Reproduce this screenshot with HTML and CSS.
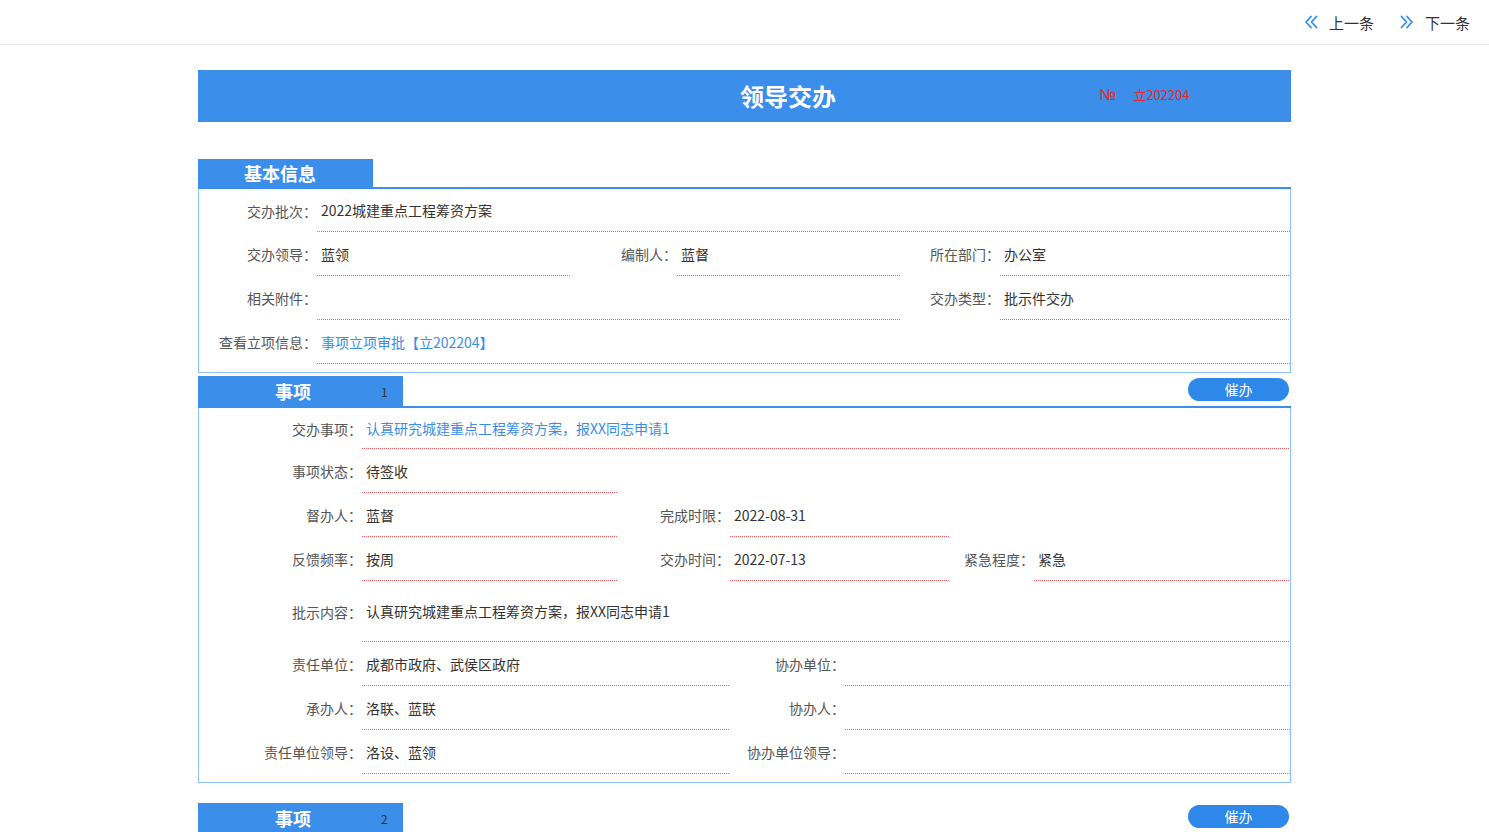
FILE: index.html
```html
<!DOCTYPE html>
<html lang="zh-CN">
<head>
<meta charset="utf-8">
<title>领导交办</title>
<link rel="stylesheet" href="styles.css">
</head>
<body>
<header class="topbar">
  <nav class="pager">
    <a class="pager-link" href="#">
      <svg class="pager-icon" viewBox="0 0 14 14" width="14" height="14"><path d="M7 1.5 L2 7 L7 12.5 M12.5 1.5 L7.5 7 L12.5 12.5"/></svg>
      <span>上一条</span>
    </a>
    <a class="pager-link" href="#">
      <svg class="pager-icon" viewBox="0 0 14 14" width="14" height="14"><path d="M1.5 1.5 L6.5 7 L1.5 12.5 M7 1.5 L12 7 L7 12.5"/></svg>
      <span>下一条</span>
    </a>
  </nav>
</header>

<main class="sheet">
  <div class="sheet-title">
    <h1 class="sheet-name">领导交办</h1>
    <div class="serial"><span class="serial-mark">№</span><span class="serial-no">立202204</span></div>
  </div>

  <section class="block block-basic">
    <div class="block-head">
      <div class="tab tab-basic">基本信息</div>
    </div>
    <div class="block-body">
      <div class="row grid-basic">
        <div class="lbl">交办批次：</div>
        <div class="val span-all">2022城建重点工程筹资方案</div>
      </div>
      <div class="row grid-basic">
        <div class="lbl">交办领导：</div>
        <div class="val">蓝领</div>
        <div class="lbl">编制人：</div>
        <div class="val">蓝督</div>
        <div class="lbl">所在部门：</div>
        <div class="val">办公室</div>
      </div>
      <div class="row grid-basic">
        <div class="lbl">相关附件：</div>
        <div class="val span-mid"></div>
        <div class="lbl">交办类型：</div>
        <div class="val">批示件交办</div>
      </div>
      <div class="row grid-basic">
        <div class="lbl">查看立项信息：</div>
        <div class="val span-all"><a class="link" href="#">事项立项审批【立202204】</a></div>
      </div>
    </div>
  </section>

  <section class="block block-item">
    <div class="block-head">
      <div class="tab tab-item"><span class="tab-text">事项</span><span class="tab-no">1</span></div>
      <button class="urge" type="button">催办</button>
    </div>
    <div class="block-body">
      <div class="row row-first grid-item">
        <div class="lbl">交办事项：</div>
        <div class="val span-all"><a class="link" href="#">认真研究城建重点工程筹资方案，报XX同志申请1</a></div>
      </div>
      <div class="row grid-item">
        <div class="lbl">事项状态：</div>
        <div class="val">待签收</div>
      </div>
      <div class="row grid-item">
        <div class="lbl">督办人：</div>
        <div class="val">蓝督</div>
        <div class="lbl">完成时限：</div>
        <div class="val">2022-08-31</div>
      </div>
      <div class="row grid-item">
        <div class="lbl">反馈频率：</div>
        <div class="val">按周</div>
        <div class="lbl">交办时间：</div>
        <div class="val">2022-07-13</div>
        <div class="lbl">紧急程度：</div>
        <div class="val">紧急</div>
      </div>
      <div class="row row-tall grid-item">
        <div class="lbl">批示内容：</div>
        <div class="val span-all">认真研究城建重点工程筹资方案，报XX同志申请1</div>
      </div>
      <div class="row grid-pair">
        <div class="lbl">责任单位：</div>
        <div class="val">成都市政府、武侯区政府</div>
        <div class="lbl">协办单位：</div>
        <div class="val"></div>
      </div>
      <div class="row grid-pair">
        <div class="lbl">承办人：</div>
        <div class="val">洛联、蓝联</div>
        <div class="lbl">协办人：</div>
        <div class="val"></div>
      </div>
      <div class="row grid-pair">
        <div class="lbl">责任单位领导：</div>
        <div class="val">洛设、蓝领</div>
        <div class="lbl">协办单位领导：</div>
        <div class="val"></div>
      </div>
    </div>
  </section>

  <section class="block block-item block-next">
    <div class="block-head">
      <div class="tab tab-item"><span class="tab-text">事项</span><span class="tab-no">2</span></div>
      <button class="urge" type="button">催办</button>
    </div>
  </section>
</main>
</body>
</html>
```

FILE: styles.css
```css
* { box-sizing: border-box; }

html, body {
  margin: 0;
  padding: 0;
  background: #fff;
}

body {
  font-family: "Noto Sans CJK SC", "Noto Sans", "Liberation Sans", sans-serif;
  font-size: 14px;
  color: #333;
  overflow: hidden;
}

/* top strip with prev / next links */
.topbar {
  height: 45px;
  border-bottom: 1px solid #e8e8e8;
  display: flex;
  justify-content: flex-end;
  align-items: center;
}

.pager {
  display: flex;
  gap: 26px;
  padding-right: 19px;
}

.pager-link {
  display: flex;
  align-items: center;
  gap: 11px;
  color: #333;
  font-size: 15px;
  text-decoration: none;
}

.pager-icon {
  fill: none;
  stroke: #2d8cf0;
  stroke-width: 1.8;
  stroke-linecap: round;
  stroke-linejoin: round;
}

/* sheet */
.sheet {
  width: 1093px;
  margin: 25px auto 0;
}

.sheet-title {
  height: 52px;
  background: #3b8eea;
  display: flex;
  align-items: center;
  padding-left: 542px;
}

.sheet-name {
  margin: 0;
  width: 96px;
  font-size: 24px;
  font-weight: 700;
  color: #fff;
  line-height: 1;
  white-space: nowrap;
}

.serial {
  margin-left: 263px;
  margin-top: -3px;
  color: #e8262b;
  font-size: 13px;
  display: flex;
  gap: 17px;
  align-items: center;
}

.serial-mark {
  font-family: "Liberation Sans", sans-serif;
  font-size: 16px;
}

/* blocks */
.block-basic { margin-top: 37px; }
.block-item { margin-top: 3px; }
.block-next { margin-top: 20px; }

.block-head {
  display: flex;
  justify-content: space-between;
  align-items: flex-start;
  border-bottom: 2px solid #3b8eea;
}

.tab {
  background: #3b8eea;
  color: #fff;
  font-size: 18px;
  font-weight: 700;
  display: flex;
  align-items: center;
}

.tab-basic {
  width: 175px;
  height: 28px;
  padding-left: 46px;
}

.tab-item {
  width: 205px;
  height: 30px;
  padding-left: 77px;
}

.tab-no {
  margin-left: 70px;
  font-size: 12px;
  font-weight: 400;
  color: #333;
}

.urge {
  width: 101px;
  height: 23px;
  margin-top: 2px;
  margin-right: 2px;
  border: none;
  border-radius: 12px;
  background: #2d88ea;
  color: #fff;
  font-family: inherit;
  font-size: 14px;
  padding: 0;
  line-height: 23px;
}

.block-body {
  border: 1px solid #8fc2f6;
  border-top: none;
  padding-bottom: 8px;
}

/* field rows */
.row {
  display: grid;
  height: 44px;
}

.block-basic .row:first-child { height: 43px; }
.row-first { height: 41px; }
.row-tall { height: 61px; }

.grid-basic { grid-template-columns: 118px 253px 107px 223px 100px 1fr; }
.grid-item { grid-template-columns: 163px 256px 112px 220px 84px 1fr; }
.grid-pair { grid-template-columns: 163px 368px 115px 1fr; }

.span-all { grid-column: 2 / -1; }
.span-mid { grid-column: 2 / 5; }

.lbl {
  display: flex;
  align-items: center;
  justify-content: flex-end;
  color: #555;
  white-space: nowrap;
}

/* value cell with a red dotted rule along its bottom edge */
.val {
  display: flex;
  align-items: center;
  padding-left: 4px;
  padding-bottom: 1px;
  color: #333;
  white-space: nowrap;
  background-image: repeating-linear-gradient(to right, #f06060 0, #f06060 1px, transparent 1px, transparent 2px);
  background-size: 100% 1px;
  background-repeat: no-repeat;
  background-position: left bottom;
}

.link {
  color: #3a8ee8;
  text-decoration: none;
}
```
